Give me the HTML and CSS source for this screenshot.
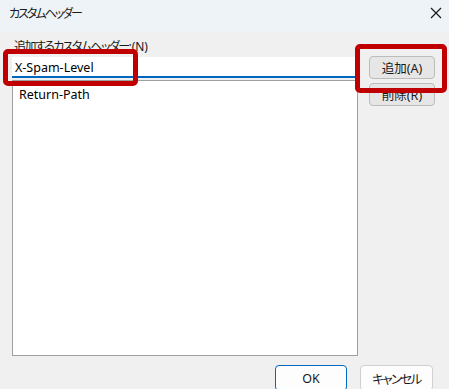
FILE: index.html
```html
<!DOCTYPE html>
<html lang="ja">
<head>
<meta charset="utf-8">
<title>カスタムヘッダー</title>
<link rel="stylesheet" href="styles.css">
</head>
<body>
<div class="window">
  <div class="titlebar">
    <span class="title">カスタムヘッダー</span>
    <svg class="close" width="12" height="12" viewBox="0 0 12 12"><path d="M1 1 L11 11 M11 1 L1 11" stroke="#1a1a1a" stroke-width="1.2" fill="none"/></svg>
  </div>
  <div class="content">
    <div class="main">
      <div class="left">
        <div class="label"><span class="jp tight">追加するカスタムヘッダー</span>:(N)</div>
        <div class="input">X-Spam-Level</div>
        <div class="list">
          <div class="item">Return-Path</div>
        </div>
      </div>
      <div class="side">
        <button class="btn side-btn"><span class="jp">追加</span>(A)</button>
        <button class="btn side-btn"><span class="jp">削除</span>(R)</button>
      </div>
    </div>
    <div class="footer">
      <button class="btn foot-btn default">OK</button>
      <button class="btn foot-btn"><span class="jp tight">キャンセル</span></button>
    </div>
  </div>
  <div class="mark mark-input"></div>
  <div class="mark mark-btn"></div>
</div>
</body>
</html>
```
FILE: styles.css
```css
html, body {
  margin: 0;
  padding: 0;
}
body {
  width: 449px;
  height: 389px;
  overflow: hidden;
  background: #f0f0f0;
  font-family: "Noto Sans", "Noto Sans CJK JP", sans-serif;
  font-size: 12px;
  color: #1a1a1a;
}
.window {
  position: relative;
  width: 449px;
  height: 389px;
  overflow: hidden;
}
.jp {
  font-family: "Noto Sans CJK JP", sans-serif;
  font-feature-settings: "palt";
}
.tight {
  letter-spacing: -1.6px;
}
.titlebar {
  height: 32px;
  background: #eef3f8;
  display: flex;
  align-items: center;
  justify-content: space-between;
  padding: 0 7px 6px 9px;
  box-sizing: border-box;
}
.title {
  font-family: "Noto Sans CJK JP", sans-serif;
  font-feature-settings: "palt";
  letter-spacing: -2px;
  font-size: 12px;
  line-height: 16px;
}
.close {
  display: block;
}
.content {
  padding: 6px 14px 0 12px;
}
.main {
  display: flex;
  gap: 11px;
}
.left {
  width: 346px;
  display: flex;
  flex-direction: column;
}
.label {
  line-height: 16px;
  padding-left: 2px;
  height: 19px;
}
.input {
  height: 21px;
  background: #ffffff;
  border-bottom: 2px solid #0067c0;
  box-sizing: border-box;
  padding: 2px 0 0 3px;
  font-size: 12.5px;
  line-height: 17px;
  color: #000;
}
.list {
  margin-top: 2px;
  height: 276px;
  background: #ffffff;
  border: 1px solid #a0a0a0;
  box-sizing: border-box;
  padding: 5px 0 0 6px;
}
.item {
  font-size: 12.5px;
  line-height: 17px;
  color: #000;
}
.side {
  display: flex;
  flex-direction: column;
  gap: 4px;
  padding-top: 18px;
}
.btn {
  font-family: "Noto Sans", "Noto Sans CJK JP", sans-serif;
  font-size: 12.5px;
  color: #1a1a1a;
  border-radius: 4px;
  padding: 0;
  margin: 0;
  box-sizing: border-box;
}
.side-btn {
  width: 66px;
  height: 23px;
  background: #e6e6e6;
  border: 1px solid #bcbcbc;
}
.footer {
  display: flex;
  justify-content: flex-end;
  gap: 13px;
  margin-top: 9px;
  padding-right: 2px;
}
.foot-btn {
  width: 73px;
  height: 26px;
  background: #fdfdfd;
  border: 1px solid #d0d0d0;
}
.foot-btn.default {
  width: 72px;
  border: 1.5px solid #0067c0;
}
.mark {
  position: absolute;
  border: 5px solid #c00000;
  border-radius: 5px;
  box-sizing: border-box;
}
.mark-input {
  left: 3px;
  top: 49px;
  width: 135px;
  height: 37px;
}
.mark-btn {
  left: 355px;
  top: 44px;
  width: 92px;
  height: 49px;
}
```
